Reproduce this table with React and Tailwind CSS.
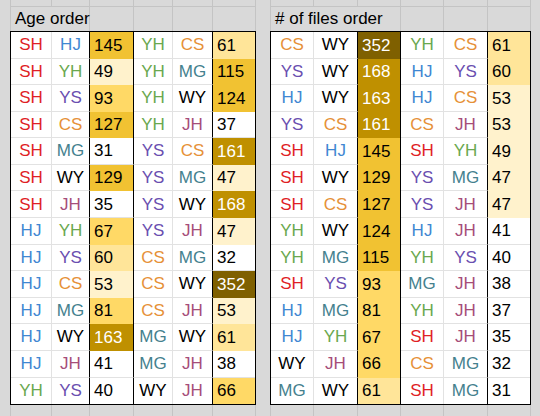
const leftRows = [
  ["SH", "HJ", 145, "YH", "CS", 61],
  ["SH", "YH", 49, "YH", "MG", 115],
  ["SH", "YS", 93, "YH", "WY", 124],
  ["SH", "CS", 127, "YH", "JH", 37],
  ["SH", "MG", 31, "YS", "CS", 161],
  ["SH", "WY", 129, "YS", "MG", 47],
  ["SH", "JH", 35, "YS", "WY", 168],
  ["HJ", "YH", 67, "YS", "JH", 47],
  ["HJ", "YS", 60, "CS", "MG", 32],
  ["HJ", "CS", 53, "CS", "WY", 352],
  ["HJ", "MG", 81, "CS", "JH", 53],
  ["HJ", "WY", 163, "MG", "WY", 61],
  ["HJ", "JH", 41, "MG", "JH", 38],
  ["YH", "YS", 40, "WY", "JH", 66],
];

const rightRows = [
  ["CS", "WY", 352, "YH", "CS", 61],
  ["YS", "WY", 168, "HJ", "YS", 60],
  ["HJ", "WY", 163, "HJ", "CS", 53],
  ["YS", "CS", 161, "CS", "JH", 53],
  ["SH", "HJ", 145, "SH", "YH", 49],
  ["SH", "WY", 129, "YS", "MG", 47],
  ["SH", "CS", 127, "YS", "JH", 47],
  ["YH", "WY", 124, "HJ", "JH", 41],
  ["YH", "MG", 115, "YH", "YS", 40],
  ["SH", "YS", 93, "MG", "JH", 38],
  ["HJ", "MG", 81, "YH", "JH", 37],
  ["HJ", "YH", 67, "SH", "JH", 35],
  ["WY", "JH", 66, "CS", "MG", 32],
  ["MG", "WY", 61, "SH", "MG", 31],
];

const nameColor = {
  SH: "text-[#df1f26]",
  HJ: "text-[#3f87d2]",
  YH: "text-[#6aa84f]",
  CS: "text-[#e69138]",
  MG: "text-[#45818e]",
  YS: "text-[#6a4fb0]",
  WY: "text-black",
  JH: "text-[#a64d79]",
};

// conditional-format style colour scale
function heat(n) {
  if (n >= 300) return "bg-[#7f6000] text-white";
  if (n >= 150) return "bg-[#bf9000] text-white";
  if (n >= 100) return "bg-[#f1c232] text-black";
  if (n >= 62) return "bg-[#ffd966] text-black";
  if (n >= 55) return "bg-[#ffe599] text-black";
  if (n >= 46) return "bg-[#fff2cc] text-black";
  return "bg-white text-black";
}

const rightLine = [
  "border-r border-r-[#e2e2e2]",
  "border-r border-r-black",
  "border-r border-r-black",
  "border-r border-r-[#e2e2e2]",
  "border-r border-r-black",
  "",
];

function Strip({ cols, className }) {
  return (
    <div className={`flex border-l border-[#c4c4c4] ${className}`}>
      {cols.map((w, i) => (
        <div key={i} className={`${w} h-full shrink-0 border-r border-[#c4c4c4]`} />
      ))}
    </div>
  );
}

function Panel({ title, rows, cols, stripCols, headCols }) {
  return (
    <div className="flex flex-col h-full">
      <Strip cols={stripCols} className="h-[7px] border-b border-b-[#c4c4c4]" />
      <div className="flex h-[24px] border-l border-[#c4c4c4]">
        {headCols.map((w, i) => (
          <div
            key={i}
            className={`${w} h-full shrink-0 border-r border-[#c4c4c4] flex items-center pl-[4px] text-[17px] text-black whitespace-nowrap`}
          >
            {i === 0 ? title : null}
          </div>
        ))}
      </div>
      <div className="flex flex-col h-[374px] border border-black bg-white">
        {rows.map((row, r) => {
          const last = r === rows.length - 1;
          return (
            <div key={r} className="flex flex-1 min-h-0">
              {row.map((v, c) => {
                const isNum = typeof v === "number";
                const base = `${cols[c]} ${rightLine[c]} shrink-0 h-full flex items-center text-[17px]`;
                if (isNum) {
                  const white = v < 46;
                  return (
                    <div
                      key={c}
                      className={`${base} pl-[4px] ${heat(v)} ${white && !last ? "border-b border-b-[#e2e2e2]" : ""}`}
                    >
                      {v}
                    </div>
                  );
                }
                return (
                  <div
                    key={c}
                    className={`${base} justify-center ${nameColor[v]} ${last ? "" : "border-b border-b-[#e2e2e2]"}`}
                  >
                    {v}
                  </div>
                );
              })}
            </div>
          );
        })}
      </div>
      <Strip cols={stripCols} className="flex-1" />
    </div>
  );
}

export default function App() {
  return (
    <main
      className="w-[540px] h-[416px] overflow-hidden bg-[#d9d9d9] flex"
      style={{ fontFamily: '"Liberation Sans", Arial, sans-serif' }}
    >
      <div className="w-[10px] shrink-0" />
      <div className="w-[246px] shrink-0">
        <Panel
          title="Age order"
          rows={leftRows}
          cols={["w-[41px]", "w-[38px]", "w-[44px]", "w-[39px]", "w-[40px]", "w-[42px]"]}
          stripCols={["w-[41px]", "w-[38px]", "w-[44px]", "w-[39px]", "w-[40px]", "w-[43px]"]}
          headCols={["w-[79px]", "w-[44px]", "w-[39px]", "w-[40px]", "w-[43px]"]}
        />
      </div>
      <div className="w-[14px] shrink-0" />
      <div className="w-[261px] shrink-0">
        <Panel
          title="# of files order"
          rows={rightRows}
          cols={["w-[43px]", "w-[44px]", "w-[43px]", "w-[43px]", "w-[44px]", "w-[42px]"]}
          stripCols={["w-[43px]", "w-[44px]", "w-[43px]", "w-[43px]", "w-[44px]", "w-[43px]"]}
          headCols={["w-[130px]", "w-[43px]", "w-[44px]", "w-[43px]"]}
        />
      </div>
    </main>
  );
}
